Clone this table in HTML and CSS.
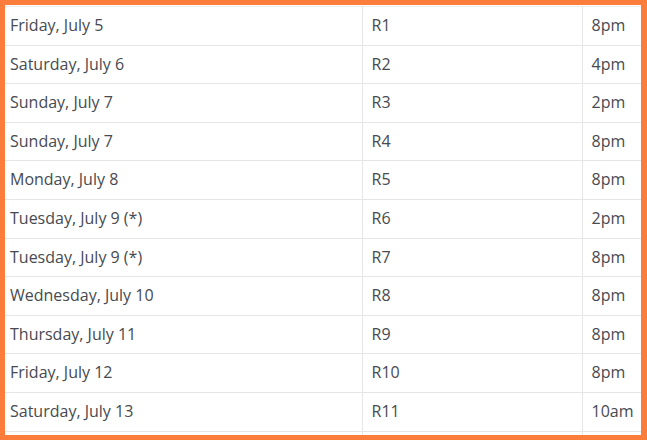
FILE: index.html
```html
<!DOCTYPE html>
<html>
<head>
<meta charset="utf-8">
<link rel="stylesheet" href="styles.css">
</head>
<body>
<div class="frame">
  <table class="schedule">
    <colgroup>
      <col class="c-date">
      <col class="c-round">
      <col class="c-time">
    </colgroup>
    <tbody>
      <tr><td>Friday, July 5</td><td>R1</td><td>8pm</td></tr>
      <tr><td>Saturday, July 6</td><td>R2</td><td>4pm</td></tr>
      <tr><td>Sunday, July 7</td><td>R3</td><td>2pm</td></tr>
      <tr><td>Sunday, July 7</td><td>R4</td><td>8pm</td></tr>
      <tr><td>Monday, July 8</td><td>R5</td><td>8pm</td></tr>
      <tr><td>Tuesday, July 9 (*)</td><td>R6</td><td>2pm</td></tr>
      <tr><td>Tuesday, July 9 (*)</td><td>R7</td><td>8pm</td></tr>
      <tr><td>Wednesday, July 10</td><td>R8</td><td>8pm</td></tr>
      <tr><td>Thursday, July 11</td><td>R9</td><td>8pm</td></tr>
      <tr><td>Friday, July 12</td><td>R10</td><td>8pm</td></tr>
      <tr><td>Saturday, July 13</td><td>R11</td><td>10am</td></tr>
      <tr class="cut"><td></td><td></td><td></td></tr>
    </tbody>
  </table>
</div>
</body>
</html>
```
FILE: styles.css
```css
html, body {
  margin: 0;
  padding: 0;
  background: #ffffff;
}
.frame {
  box-sizing: border-box;
  width: 647px;
  height: 440px;
  border-style: solid;
  border-color: #fb7d3c;
  border-width: 5px 6px 5px 5px;
  overflow: hidden;
  background: #ffffff;
}
.schedule {
  width: 636px;
  border-collapse: collapse;
  table-layout: fixed;
  font-family: "Open Sans", "Liberation Sans", sans-serif;
  font-size: 16px;
  line-height: 25.6px;
  color: #474a50;
  margin-top: 1px;
  border-top: 1px solid #ececec;
}
.c-date { width: 357px; }
.c-round { width: 220px; }
.c-time { width: 59px; }
.schedule td {
  padding: 6px 4px 6px 5px;
  border-bottom: 1px solid #e6e6e6;
  border-left: 1px solid #e6e6e6;
  white-space: nowrap;
  vertical-align: middle;
}
.schedule .cut td {
  height: 25.6px;
}
.schedule td:first-child {
  border-left: none;
}
.schedule td:nth-child(2),
.schedule td:nth-child(3) {
  padding-left: 9px;
}
```
